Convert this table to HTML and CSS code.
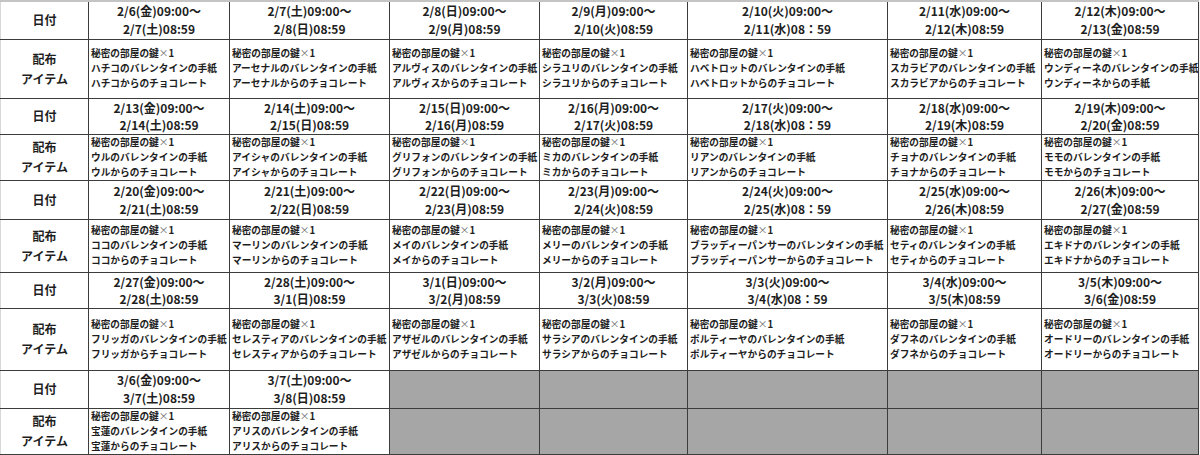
FILE: index.html
```html
<!DOCTYPE html>
<html lang="ja">
<head>
<meta charset="utf-8">
<title>配布スケジュール</title>
<link rel="stylesheet" href="styles.css">
</head>
<body>
<table class="sched">
<colgroup>
<col class="c0"><col class="c1"><col class="c2"><col class="c3"><col class="c4"><col class="c5"><col class="c6"><col class="c7">
</colgroup>
<tbody>
<tr class="d r1">
<th class="lbl">日付</th>
<td class="dt">2/6(金)09:00～<br>2/7(土)08:59</td>
<td class="dt">2/7(土)09:00～<br>2/8(日)08:59</td>
<td class="dt">2/8(日)09:00～<br>2/9(月)08:59</td>
<td class="dt">2/9(月)09:00～<br>2/10(火)08:59</td>
<td class="dt">2/10(火)09:00～<br>2/11(水)08：59</td>
<td class="dt">2/11(水)09:00～<br>2/12(木)08:59</td>
<td class="dt">2/12(木)09:00～<br>2/13(金)08:59</td>
</tr>
<tr class="i r2">
<th class="lbl">配布<br>アイテム</th>
<td class="it">秘密の部屋の鍵<span class="x">×</span>1<br>ハチコのバレンタインの手紙<br>ハチコからのチョコレート</td>
<td class="it">秘密の部屋の鍵<span class="x">×</span>1<br>アーセナルのバレンタインの手紙<br>アーセナルからのチョコレート</td>
<td class="it">秘密の部屋の鍵<span class="x">×</span>1<br>アルヴィスのバレンタインの手紙<br>アルヴィスからのチョコレート</td>
<td class="it">秘密の部屋の鍵<span class="x">×</span>1<br>シラユリのバレンタインの手紙<br>シラユリからのチョコレート</td>
<td class="it">秘密の部屋の鍵<span class="x">×</span>1<br>ハベトロットのバレンタインの手紙<br>ハベトロットからのチョコレート</td>
<td class="it">秘密の部屋の鍵<span class="x">×</span>1<br>スカラビアのバレンタインの手紙<br>スカラビアからのチョコレート</td>
<td class="it">秘密の部屋の鍵<span class="x">×</span>1<br>ウンディーネのバレンタインの手紙<br>ウンディーネからの手紙</td>
</tr>
<tr class="d r3">
<th class="lbl">日付</th>
<td class="dt">2/13(金)09:00～<br>2/14(土)08:59</td>
<td class="dt">2/14(土)09:00～<br>2/15(日)08:59</td>
<td class="dt">2/15(日)09:00～<br>2/16(月)08:59</td>
<td class="dt">2/16(月)09:00～<br>2/17(火)08:59</td>
<td class="dt">2/17(火)09:00～<br>2/18(水)08：59</td>
<td class="dt">2/18(水)09:00～<br>2/19(木)08:59</td>
<td class="dt">2/19(木)09:00～<br>2/20(金)08:59</td>
</tr>
<tr class="i r4">
<th class="lbl">配布<br>アイテム</th>
<td class="it">秘密の部屋の鍵<span class="x">×</span>1<br>ウルのバレンタインの手紙<br>ウルからのチョコレート</td>
<td class="it">秘密の部屋の鍵<span class="x">×</span>1<br>アイシャのバレンタインの手紙<br>アイシャからのチョコレート</td>
<td class="it">秘密の部屋の鍵<span class="x">×</span>1<br>グリフォンのバレンタインの手紙<br>グリフォンからのチョコレート</td>
<td class="it">秘密の部屋の鍵<span class="x">×</span>1<br>ミカのバレンタインの手紙<br>ミカからのチョコレート</td>
<td class="it">秘密の部屋の鍵<span class="x">×</span>1<br>リアンのバレンタインの手紙<br>リアンからのチョコレート</td>
<td class="it">秘密の部屋の鍵<span class="x">×</span>1<br>チョナのバレンタインの手紙<br>チョナからのチョコレート</td>
<td class="it">秘密の部屋の鍵<span class="x">×</span>1<br>モモのバレンタインの手紙<br>モモからのチョコレート</td>
</tr>
<tr class="d r5">
<th class="lbl">日付</th>
<td class="dt">2/20(金)09:00～<br>2/21(土)08:59</td>
<td class="dt">2/21(土)09:00～<br>2/22(日)08:59</td>
<td class="dt">2/22(日)09:00～<br>2/23(月)08:59</td>
<td class="dt">2/23(月)09:00～<br>2/24(火)08:59</td>
<td class="dt">2/24(火)09:00～<br>2/25(水)08：59</td>
<td class="dt">2/25(水)09:00～<br>2/26(木)08:59</td>
<td class="dt">2/26(木)09:00～<br>2/27(金)08:59</td>
</tr>
<tr class="i r6">
<th class="lbl">配布<br>アイテム</th>
<td class="it">秘密の部屋の鍵<span class="x">×</span>1<br>ココのバレンタインの手紙<br>ココからのチョコレート</td>
<td class="it">秘密の部屋の鍵<span class="x">×</span>1<br>マーリンのバレンタインの手紙<br>マーリンからのチョコレート</td>
<td class="it">秘密の部屋の鍵<span class="x">×</span>1<br>メイのバレンタインの手紙<br>メイからのチョコレート</td>
<td class="it">秘密の部屋の鍵<span class="x">×</span>1<br>メリーのバレンタインの手紙<br>メリーからのチョコレート</td>
<td class="it">秘密の部屋の鍵<span class="x">×</span>1<br>ブラッディーパンサーのバレンタインの手紙<br>ブラッディーパンサーからのチョコレート</td>
<td class="it">秘密の部屋の鍵<span class="x">×</span>1<br>セティのバレンタインの手紙<br>セティからのチョコレート</td>
<td class="it">秘密の部屋の鍵<span class="x">×</span>1<br>エキドナのバレンタインの手紙<br>エキドナからのチョコレート</td>
</tr>
<tr class="d r7">
<th class="lbl">日付</th>
<td class="dt">2/27(金)09:00～<br>2/28(土)08:59</td>
<td class="dt">2/28(土)09:00～<br>3/1(日)08:59</td>
<td class="dt">3/1(日)09:00～<br>3/2(月)08:59</td>
<td class="dt">3/2(月)09:00～<br>3/3(火)08:59</td>
<td class="dt">3/3(火)09:00～<br>3/4(水)08：59</td>
<td class="dt">3/4(水)09:00～<br>3/5(木)08:59</td>
<td class="dt">3/5(木)09:00～<br>3/6(金)08:59</td>
</tr>
<tr class="i r8">
<th class="lbl">配布<br>アイテム</th>
<td class="it">秘密の部屋の鍵<span class="x">×</span>1<br>フリッガのバレンタインの手紙<br>フリッガからチョコレート</td>
<td class="it">秘密の部屋の鍵<span class="x">×</span>1<br>セレスティアのバレンタインの手紙<br>セレスティアからのチョコレート</td>
<td class="it">秘密の部屋の鍵<span class="x">×</span>1<br>アザゼルのバレンタインの手紙<br>アザゼルからのチョコレート</td>
<td class="it">秘密の部屋の鍵<span class="x">×</span>1<br>サラシアのバレンタインの手紙<br>サラシアからのチョコレート</td>
<td class="it">秘密の部屋の鍵<span class="x">×</span>1<br>ポルティーヤのバレンタインの手紙<br>ポルティーヤからのチョコレート</td>
<td class="it">秘密の部屋の鍵<span class="x">×</span>1<br>ダフネのバレンタインの手紙<br>ダフネからのチョコレート</td>
<td class="it">秘密の部屋の鍵<span class="x">×</span>1<br>オードリーのバレンタインの手紙<br>オードリーからのチョコレート</td>
</tr>
<tr class="d r9">
<th class="lbl">日付</th>
<td class="dt">3/6(金)09:00～<br>3/7(土)08:59</td>
<td class="dt">3/7(土)09:00～<br>3/8(日)08:59</td>
<td class="empty"></td>
<td class="empty"></td>
<td class="empty"></td>
<td class="empty"></td>
<td class="empty"></td>
</tr>
<tr class="i r10">
<th class="lbl">配布<br>アイテム</th>
<td class="it">秘密の部屋の鍵<span class="x">×</span>1<br>宝蓮のバレンタインの手紙<br>宝蓮からのチョコレート</td>
<td class="it">秘密の部屋の鍵<span class="x">×</span>1<br>アリスのバレンタインの手紙<br>アリスからのチョコレート</td>
<td class="empty"></td>
<td class="empty"></td>
<td class="empty"></td>
<td class="empty"></td>
<td class="empty"></td>
</tr>
</tbody>
</table>
</body>
</html>
```

FILE: styles.css
```css
html, body {
  margin: 0;
  padding: 0;
  background: #f4f4f4;
}
body {
  font-family: "Noto Sans CJK JP", "Noto Sans", sans-serif;
  color: #1e1e1e;
}
.sched {
  border-collapse: collapse;
  table-layout: fixed;
  width: 1198px;
  background: #ffffff;
}
.c0 { width: 88px; }
.c1 { width: 141px; }
.c2 { width: 160px; }
.c3 { width: 150px; }
.c4 { width: 148px; }
.c5 { width: 200px; }
.c6 { width: 154px; }
.c7 { width: 157px; }
.sched th,
.sched td {
  border: 1px solid #3c3c3c;
  padding: 0;
  overflow: hidden;
  white-space: nowrap;
  vertical-align: middle;
}
.sched tr:first-child th,
.sched tr:first-child td {
  border-top: 2px solid #c4c4c4;
}
.sched th.lbl {
  border-left: 1px solid #d8d8d8;
}
.lbl {
  font-size: 12px;
  font-weight: 700;
  line-height: 20px;
  text-align: center;
}
.dt {
  font-size: 12px;
  font-weight: 700;
  line-height: 17px;
  text-align: center;
}
.r1 .dt,
.r5 .dt,
.r9 .dt {
  line-height: 18px;
}
.it {
  font-size: 9.7px;
  font-weight: 700;
  line-height: 15px;
  text-align: left;
}
.sched td.it {
  padding-left: 2px;
}
.x {
  font-weight: 400;
  color: #666;
}
.empty {
  background: #a6a6a6;
}
.r1 { height: 38px; }
.r2 { height: 59px; }
.r3 { height: 36px; }
.r4 { height: 46px; }
.r5 { height: 39px; }
.r6 { height: 53px; }
.r7 { height: 36px; }
.r8 { height: 62px; }
.r9 { height: 38px; }
.r10 { height: 46px; }
```
